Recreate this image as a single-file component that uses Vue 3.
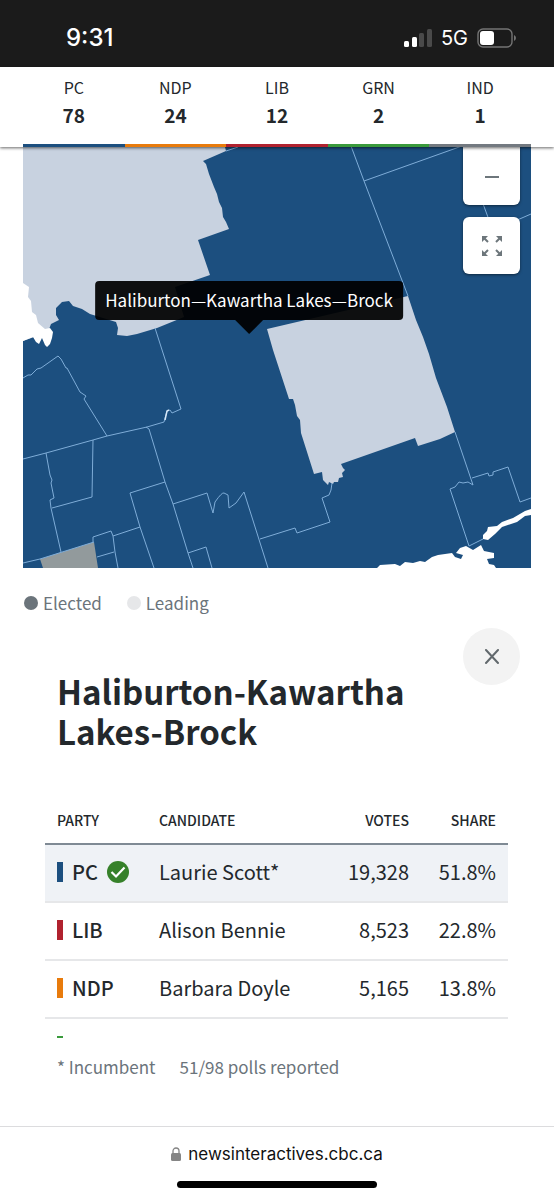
<script setup>
const seats = [
  { party: 'PC', count: 78, tone: 'pc' },
  { party: 'NDP', count: 24, tone: 'ndp' },
  { party: 'LIB', count: 12, tone: 'lib' },
  { party: 'GRN', count: 2, tone: 'grn' },
  { party: 'IND', count: 1, tone: 'ind' },
]

const results = [
  { party: 'PC', tone: 'pc', candidate: 'Laurie Scott*', votes: '19,328', share: '51.8%', elected: true },
  { party: 'LIB', tone: 'lib', candidate: 'Alison Bennie', votes: '8,523', share: '22.8%', elected: false },
  { party: 'NDP', tone: 'ndp', candidate: 'Barbara Doyle', votes: '5,165', share: '13.8%', elected: false },
]

const borders = [
  'M226 151L238 147',
  'M351 146L364 181L408 296',
  'M364 181L462 146',
  'M482 201L489 220L515 221L531 214',
  'M23 378L28 375L31 375L37 369L41 368L58 356L61 359L66 368L67 368L80 392L86 396L84 399L107 436',
  'M23 459L46 453L93 440L107 436L147 427L164 422L167 411L170 410L172 413L181 409L155 328',
  'M146 427L149 429L165 482L173 504L188 553L193 568',
  'M165 482L130 493L140 527L154 568',
  'M140 527L113 536',
  'M173 504L207 493L213 513L215 502Q222 492 224 493L228 495L229 508L236 503L244 492L268 568',
  'M188 553L206 547L212 568',
  'M260 539L295 528L297 533L330 522L322 498L329 495L331 490L332 483',
  'M46 453L50 475L52 480L51 483L54 498L50 500L51 508L61 552',
  'M93 440L92 497L52 508',
  'M23 563L40 559L94 542',
  'M93 542L93 537L111 531L113 536L115 552L118 568',
  'M97 557L114 552',
  'M455 432L473 485L468 482L463 483L459 482L455 487L450 489L469 546L483 539',
  'M472 478L488 473L489 476L493 475L493 472L508 467L520 502L531 498',
]
</script>

<template>
  <div class="page">
    <div class="status">
      <span class="clock">9:31</span>
      <span class="signals">
        <svg class="bars" viewBox="0 0 28 18" aria-hidden="true">
          <rect x="0" y="12" width="5" height="6" rx="1.5" fill="#fff" />
          <rect x="8" y="8" width="5" height="10" rx="1.5" fill="#fff" />
          <rect x="15" y="4" width="5" height="14" rx="1.5" fill="#4a4a4a" />
          <rect x="23" y="0" width="5" height="18" rx="1.5" fill="#4a4a4a" />
        </svg>
        <span class="network">5G</span>
        <svg class="battery" viewBox="0 0 39 20" aria-hidden="true">
          <rect x="1" y="1" width="34" height="18" rx="5" fill="none" stroke="#747474" stroke-width="1.4" />
          <rect x="3" y="3" width="14" height="14" rx="3" fill="#fff" />
          <path d="M37 7Q39 8 39 10Q39 12 37 13Z" fill="#747474" />
        </svg>
      </span>
    </div>

    <header class="tally">
      <div v-for="s in seats" :key="s.party" class="seat">
        <span class="seat-name">{{ s.party }}</span>
        <strong class="seat-count">{{ s.count }}</strong>
        <span class="seat-bar" :class="s.tone"></span>
      </div>
    </header>

    <main>
      <section class="map" aria-label="Riding map">
        <svg class="land" viewBox="23 147 508 421" aria-hidden="true">
          <rect x="23" y="147" width="508" height="421" fill="#1c4f7f" />
          <path fill="#c8d2e0" d="M23 147H225L226 151L203 161L206 164L209 174L214 187L217 194L219 202L222 208L223 217L226 222L229 229L198 240L210 275L175 287L184 317L157 328L137 334L127 336L117 335L118 328L116 322L90 314L82 309L73 306L69 301L62 302L56 308L56 315L59 320L51 324L48 332L23 341Z" />
          <path fill="#fff" d="M23 283L26 285L29 287L28 297L31 301L32 312L36 315L38 323L45 329L50 328L53 332L52 338L50 344L47 347L45 345L42 338L39 344L36 342L33 337L23 341Z" />
          <path fill="#c8d2e0" d="M267 329L408 296L416 320L423 337L429 354L436 378L447 407L455 432L440 439L418 446L415 438L341 464L343 468L345 470L342 473L343 477L339 478L338 482L334 482L333 484L329 482L328 485L323 480L322 472L314 474L301 433L300 420L297 416L295 405L293 399L289 399L273 350Z" />
          <path fill="#929a9c" d="M40 559L94 542L98 568H43Z" />
          <g fill="none" stroke="#7fadd8" stroke-width="1">
            <path v-for="d in borders" :key="d" :d="d" />
          </g>
          <path d="M165 420L167 411L169 410" fill="none" stroke="#d5e6f6" stroke-width="1.5" />
          <path fill="#fff" d="M531 509L525 511L513 518L502 522L497 526L488 527L487 531L483 535L483 539L488 540L495 534L502 527L517 522L525 516L531 515Z" />
          <path fill="#fff" d="M377 568L380 565L395 564L400 566L405 562L413 563L420 561L425 562L432 557L438 555L452 553L455 557L461 559L463 555L456 553L460 548L466 546L473 550L481 545L484 551L494 553L494 558L487 559L489 564L494 565L496 568Z" />
        </svg>
        <div class="controls">
          <button class="control cut" type="button" aria-label="Zoom out">
            <svg width="16" height="16" viewBox="0 0 16 16"><path d="M1 9H15" stroke="#6d767b" stroke-width="2" /></svg>
          </button>
          <button class="control" type="button" aria-label="Full screen">
            <svg width="20" height="20" viewBox="0 0 20 20">
              <g fill="#6d767b" stroke="#6d767b" stroke-width="2">
                <path d="M0 0H6L0 6ZM14 0H20V6ZM0 14V20H6ZM20 14V20H14Z" stroke="none" />
                <path d="M2 2L6 6M18 2L14 6M2 18L6 14M18 18L14 14" />
              </g>
            </svg>
          </button>
        </div>
        <div class="tip" role="tooltip">Haliburton—Kawartha Lakes—Brock</div>
      </section>

      <div class="legend">
        <span class="key"><i class="dot elected"></i>Elected</span>
        <span class="key"><i class="dot leading"></i>Leading</span>
      </div>

      <section class="riding">
        <button class="close" type="button" aria-label="Close">
          <svg width="16" height="16" viewBox="0 0 16 16"><path d="M2 1L14 14M14 1L2 14" stroke="#62696d" stroke-width="2" stroke-linecap="round" /></svg>
        </button>
        <h1>Haliburton-Kawartha Lakes-Brock</h1>
        <table>
          <colgroup><col class="c-party" /><col /><col class="c-votes" /><col class="c-share" /></colgroup>
          <thead>
            <tr><th scope="col">PARTY</th><th scope="col">CANDIDATE</th><th scope="col" class="num">VOTES</th><th scope="col" class="num">SHARE</th></tr>
          </thead>
          <tbody>
            <tr v-for="r in results" :key="r.party" :class="{ winner: r.elected }">
              <td>
                <span class="party">
                  <i class="chip" :class="r.tone"></i>{{ r.party }}
                  <svg v-if="r.elected" width="22" height="22" viewBox="0 0 22 22" role="img" aria-label="Elected">
                    <circle cx="11" cy="11" r="11" fill="#36812a" />
                    <path d="M4.500 11L9 15.500L17.500 6.500" fill="none" stroke="#fff" stroke-width="2.200" />
                  </svg>
                </span>
              </td>
              <td>{{ r.candidate }}</td>
              <td class="num">{{ r.votes }}</td>
              <td class="num">{{ r.share }}</td>
            </tr>
          </tbody>
        </table>
        <i class="sliver grn"></i>
        <p class="notes"><span>* Incumbent</span><span>51/98 polls reported</span></p>
      </section>
    </main>

    <footer class="browser">
      <div class="address">
        <svg width="10" height="14" viewBox="0 0 10 14" aria-hidden="true">
          <path d="M2 7V4A3 3 0 0 1 8 4V7" fill="none" stroke="#858585" stroke-width="1.300" />
          <rect x="0" y="6" width="10" height="8" rx="1.500" fill="#858585" />
        </svg>
        <span>newsinteractives.cbc.ca</span>
      </div>
      <div class="home"></div>
    </footer>
  </div>
</template>

<style>
body {
  margin: 0;
  background: #fff;
}
</style>

<style scoped>
.page {
  min-height: 100vh;
  display: flex;
  flex-direction: column;
  font-family: "Noto Sans CJK SC", "Noto Sans", sans-serif;
  color: #23282c;
}
.page * {
  box-sizing: border-box;
}
main {
  flex: 1;
}
i {
  display: block;
}
svg {
  display: block;
  flex: none;
}
.status {
  height: 67px;
  padding: 8px 38px 0 66px;
  display: flex;
  align-items: center;
  justify-content: space-between;
  background: #1b1b1b;
  color: #fff;
  font-family: Inter, sans-serif;
}
.clock {
  font-size: 24px;
  font-weight: 500;
}
.signals {
  display: flex;
  align-items: center;
  gap: 9px;
}
.bars {
  width: 28px;
  height: 18px;
}
.network {
  font-size: 20px;
  font-weight: 400;
}
.battery {
  width: 39px;
  height: 20px;
}
.tally {
  position: relative;
  z-index: 1;
  display: flex;
  padding: 0 23px;
  background: #fff;
  box-shadow: 0 1px 3px rgba(0, 0, 0, 0.6);
}
.seat {
  flex: 1;
  display: flex;
  flex-direction: column;
  align-items: center;
  padding-top: 7px;
}
.seat-name {
  font-size: 16px;
  line-height: 27px;
}
.seat-count {
  font-size: 19px;
  line-height: 27px;
}
.seat-bar {
  align-self: stretch;
  height: 3px;
  margin-top: 16px;
}
.pc {
  background: #1c4f7f;
}
.ndp {
  background: #e87b0c;
}
.lib {
  background: #b0222f;
}
.grn {
  background: #3a9a3c;
}
.ind {
  background: #737980;
}
.map {
  position: relative;
  margin: 0 23px;
}
.land {
  width: 100%;
  height: auto;
}
.controls {
  position: absolute;
  top: 0;
  right: 11px;
  display: flex;
  flex-direction: column;
  gap: 12px;
}
.control {
  width: 57px;
  height: 57px;
  padding: 0;
  display: flex;
  align-items: center;
  justify-content: center;
  border: 0;
  border-radius: 6px;
  background: #fff;
  box-shadow: 0 1px 3px rgba(0, 0, 0, 0.5);
}
.cut {
  height: 58px;
  border-radius: 0 0 6px 6px;
}
.tip {
  position: absolute;
  top: 134px;
  left: 44.5%;
  transform: translateX(-50%);
  padding: 0 10px 2px;
  border-radius: 4px;
  background: rgba(0, 0, 0, 0.93);
  color: #fff;
  font-size: 17px;
  line-height: 37px;
  white-space: nowrap;
}
.tip::after {
  content: "";
  position: absolute;
  top: 100%;
  left: 50%;
  margin-left: -14px;
  border: 14px solid transparent;
  border-top-color: rgba(0, 0, 0, 0.93);
  border-bottom: 0;
}
.legend {
  display: flex;
  gap: 25px;
  margin: 22px 24px 0;
  color: #6b747b;
  font-size: 17px;
  line-height: 26px;
}
.key {
  display: flex;
  align-items: center;
  gap: 5px;
}
.dot {
  width: 14px;
  height: 14px;
  border-radius: 50%;
}
.elected {
  background: #6b747b;
}
.leading {
  background: #e6e7e9;
}
.riding {
  padding: 12px 46px 0 45px;
}
.close {
  display: flex;
  align-items: center;
  justify-content: center;
  width: 57px;
  height: 57px;
  margin: 0 -12px 0 auto;
  padding: 0;
  border: 0;
  border-radius: 50%;
  background: #f3f3f3;
}
h1 {
  margin: -14px 80px 0 12px;
  font-size: 33px;
  line-height: 40px;
  font-weight: 700;
}
table {
  width: 100%;
  margin-top: 45px;
  table-layout: fixed;
  border-collapse: separate;
  border-spacing: 0;
}
.c-party {
  width: 102px;
}
.c-votes {
  width: 100px;
}
.c-share {
  width: 87px;
}
th {
  height: 49px;
  padding: 0 12px;
  border-bottom: 2px solid #7f8a94;
  font-size: 14px;
  font-weight: 500;
  text-align: left;
}
td {
  height: 58px;
  padding: 0 12px 2px;
  border-bottom: 2px solid #e6e7e9;
  font-size: 20px;
  line-height: 28px;
  white-space: nowrap;
}
.winner td {
  background: #eff2f6;
}
th.num,
td.num {
  padding-left: 0;
  text-align: right;
}
.party {
  display: flex;
  align-items: center;
  gap: 9px;
  font-weight: 500;
}
.chip {
  width: 6px;
  height: 20px;
}
.sliver {
  width: 6px;
  height: 2px;
  margin: 17px 12px 0;
}
.notes {
  display: flex;
  gap: 24px;
  margin: 16px 12px 24px;
  color: #6b747b;
  font-size: 17px;
  line-height: 26px;
}
.browser {
  border-top: 1px solid #dcdcde;
  padding: 14px 0 12px;
  font-family: Inter, sans-serif;
  color: #111;
}
.address {
  display: flex;
  align-items: center;
  justify-content: center;
  gap: 7px;
  font-size: 17px;
  line-height: 26px;
}
.home {
  width: 36%;
  height: 7px;
  margin: 14px auto 0;
  border-radius: 4px;
  background: #000;
}
</style>
